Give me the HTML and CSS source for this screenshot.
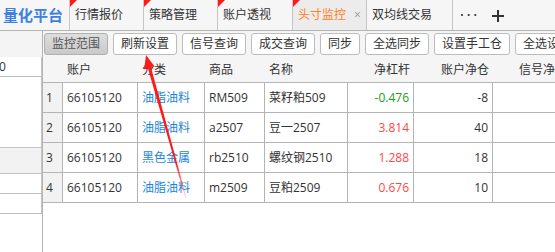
FILE: index.html
```html
<!DOCTYPE html>
<html lang="zh-CN">
<head>
<meta charset="utf-8">
<title>头寸监控</title>
<link rel="stylesheet" href="styles.css">
</head>
<body>
<div class="app">
  <header class="tabbar">
    <div class="brand">量化平台</div>
    <div class="tab flag">行情报价</div>
    <div class="tab flag">策略管理</div>
    <div class="tab flag w75">账户透视</div>
    <div class="tab flag active">头寸监控<span class="close">×</span></div>
    <div class="tab wide">双均线交易</div>
    <div class="more">
      <svg class="dots" width="18" height="4" viewBox="0 0 18 4"><circle cx="2" cy="2" r="1.1"/><circle cx="8.7" cy="2" r="1.1"/><circle cx="15.3" cy="2" r="1.1"/></svg>
      <svg class="plus" width="12" height="12" viewBox="0 0 12 12"><rect x="0" y="5" width="12" height="2"/><rect x="5" y="0" width="2" height="12"/></svg>
    </div>
  </header>
  <div class="body">
    <aside class="side">
      <div class="side-top"></div>
      <div class="side-list">
        <div class="side-input">0</div>
        <div class="side-gap"></div>
        <div class="side-band"></div>
        <div class="side-row"></div>
        <div class="side-row"></div>
      </div>
    </aside>
    <main class="main">
      <div class="toolbar">
        <button class="btn pressed">监控范围</button>
        <button class="btn">刷新设置</button>
        <button class="btn">信号查询</button>
        <button class="btn">成交查询</button>
        <button class="btn">同步</button>
        <button class="btn">全选同步</button>
        <button class="btn">设置手工仓</button>
        <button class="btn">全选设置</button>
      </div>
      <div class="grid">
        <div class="row head">
          <div class="c rn"></div>
          <div class="c">账户</div>
          <div class="c">分类</div>
          <div class="c">商品</div>
          <div class="c">名称</div>
          <div class="c r">净杠杆</div>
          <div class="c r">账户净仓</div>
          <div class="c r">信号净仓</div>
        </div>
        <div class="row">
          <div class="c rn">1</div>
          <div class="c">66105120</div>
          <div class="c cat">油脂油料</div>
          <div class="c">RM509</div>
          <div class="c">菜籽粕509</div>
          <div class="c r down">-0.476</div>
          <div class="c r">-8</div>
          <div class="c r"></div>
        </div>
        <div class="row">
          <div class="c rn">2</div>
          <div class="c">66105120</div>
          <div class="c cat">油脂油料</div>
          <div class="c">a2507</div>
          <div class="c">豆一2507</div>
          <div class="c r up">3.814</div>
          <div class="c r">40</div>
          <div class="c r"></div>
        </div>
        <div class="row">
          <div class="c rn">3</div>
          <div class="c">66105120</div>
          <div class="c cat">黑色金属</div>
          <div class="c">rb2510</div>
          <div class="c">螺纹钢2510</div>
          <div class="c r up">1.288</div>
          <div class="c r">18</div>
          <div class="c r"></div>
        </div>
        <div class="row">
          <div class="c rn">4</div>
          <div class="c">66105120</div>
          <div class="c cat">油脂油料</div>
          <div class="c">m2509</div>
          <div class="c">豆粕2509</div>
          <div class="c r up">0.676</div>
          <div class="c r">10</div>
          <div class="c r"></div>
        </div>
      </div>
    </main>
  </div>
  <svg class="arrow" width="555" height="252" viewBox="0 0 555 252">
    <defs>
      <linearGradient id="fade" x1="146" y1="56" x2="186" y2="198" gradientUnits="userSpaceOnUse">
        <stop offset="0" stop-color="#ff1a1a"/>
        <stop offset="0.75" stop-color="#ff1a1a"/>
        <stop offset="1" stop-color="#ff1a1a" stop-opacity="0.1"/>
      </linearGradient>
    </defs>
    <polygon fill="url(#fade)" points="146,55 154.6,66.4 151,67.4 186.6,197.8 185.4,198.2 147.9,68.3 144.2,69.4"/>
  </svg>
</div>
</body>
</html>
```
FILE: styles.css
```css
* { box-sizing: border-box; }
html, body { margin: 0; padding: 0; background: #fff; }
body {
  font-family: "Open Sans", "Noto Sans CJK SC", sans-serif;
  font-size: 12px;
  color: #333;
}
.app {
  position: relative;
  width: 555px;
  height: 252px;
  overflow: hidden;
  display: flex;
  flex-direction: column;
}

/* tab bar */
.tabbar {
  display: flex;
  height: 31px;
  flex: none;
  background: #f6f6f6;
  border-bottom: 1px solid #b4b4b4;
  white-space: nowrap;
}
.brand {
  width: 69px;
  flex: none;
  padding-left: 3px;
  line-height: 30px;
  font-size: 15px;
  font-weight: bold;
  color: #3c80e4;
  overflow: hidden;
}
.tab {
  position: relative;
  width: 74px;
  flex: none;
  border-left: 1px solid #c6c6c6;
  padding-left: 5px;
  line-height: 30px;
  font-size: 12px;
  color: #333;
}
.tab.w75 { width: 75px; }
.tab.wide { width: 86px; }
.tab.active { background: #ececec; color: #ff7f26; }
.tab .close { color: #999; font-size: 12px; margin-left: 8px; }
.tab.flag::before {
  content: "";
  position: absolute;
  left: 0;
  top: 0;
  border-top: 7px solid #ff1a1a;
  border-right: 7px solid transparent;
}
.more {
  flex: 1;
  border-left: 1px solid #c6c6c6;
  display: flex;
  align-items: center;
  padding-left: 7px;
  gap: 14px;
}
.more svg { fill: #333; display: block; }
.more .plus { margin-top: 1px; }

/* body */
.body { flex: 1; display: flex; min-height: 0; }
.side {
  width: 42px;
  flex: none;
  display: flex;
  flex-direction: column;
}
.side-top { height: 26px; background: #f4f4f4; }
.side-list { border-right: 1px solid #c4c4c4; }
.side-input {
  height: 20px;
  line-height: 19px;
  border-bottom: 1px solid #bdbdbd;
  margin-left: -1px;
  background: #fff;
}
.side-gap { height: 70px; }
.side-band {
  height: 27px;
  background: #f2f2f2;
  border-top: 1px solid #c4c4c4;
  border-bottom: 1px solid #c4c4c4;
}
.side-row { height: 20px; border-bottom: 1px solid #bdbdbd; }

.main {
  flex: 1;
  min-width: 0;
  border-left: 1px solid #b4b4b4;
  overflow: hidden;
}
.toolbar {
  height: 26px;
  background: #f5f5f5;
  display: flex;
  gap: 5px;
  padding: 2px 0 0 1px;
  white-space: nowrap;
}
.btn {
  flex: none;
  height: 22px;
  padding: 0 7px;
  border: 1px solid #bcbcbc;
  border-radius: 3px;
  background: #fff;
  font-family: inherit;
  font-size: 12px;
  line-height: 20px;
  color: #333;
}
.btn.pressed {
  background: linear-gradient(#dedede, #c9c9c9);
  border-color: #b0b0b0;
  color: #555;
}

/* grid */
.grid { width: max-content; }
.row {
  display: grid;
  grid-template-columns: 20px 75px 67px 60px 83px 66px 79px 78px;
  height: 30px;
  border-bottom: 1px solid #b4b4b4;
}
.row.head { height: 26px; background: #f5f5f5; }
.c {
  padding: 0 4px;
  line-height: 29px;
  white-space: nowrap;
  overflow: hidden;
  border-right: 1px solid #b4b4b4;
}
.head .c { border-right: 0; line-height: 26px; }
.c.r { text-align: right; }
.c.rn { background: #f2f2f2; padding: 0 3px; }
.head .c.rn { background: transparent; }
.c.cat { color: #1b84e0; }
.c.down { color: #1a9e1a; }
.c.up { color: #ff4646; }

.arrow {
  position: absolute;
  left: 0;
  top: 0;
  pointer-events: none;
}
```
